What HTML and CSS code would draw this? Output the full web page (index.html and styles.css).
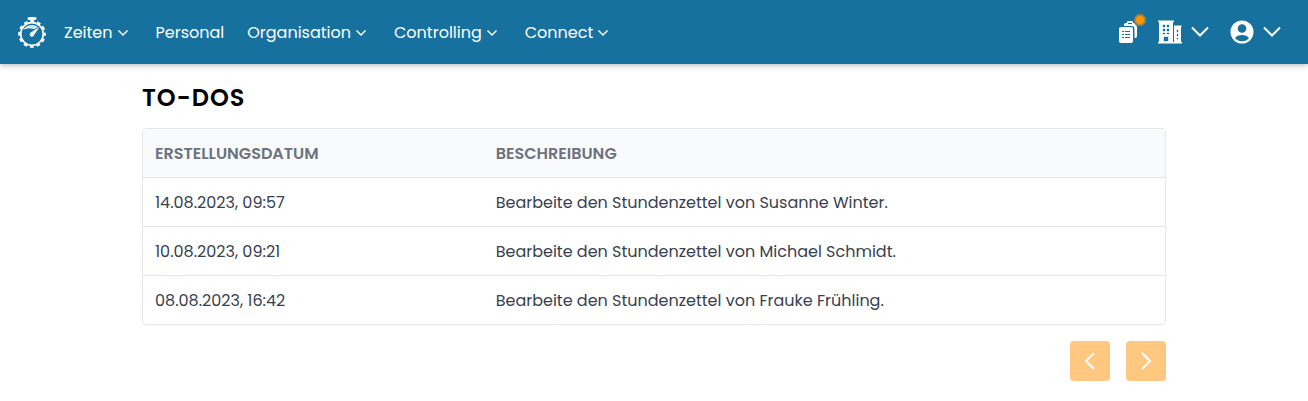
FILE: index.html
```html
<!DOCTYPE html>
<html lang="de">
<head>
<meta charset="utf-8">
<meta name="viewport" content="width=device-width, initial-scale=1">
<title>To-Dos</title>
<link rel="stylesheet" href="styles.css">
</head>
<body>
<header class="topbar">
  <a class="logo" href="#" aria-label="Startseite">
    <svg width="30" height="32" viewBox="0 0 30 32" fill="none" stroke="#fff">
      <path d="M12 2.500h6" stroke-width="3" stroke-linecap="round"/>
      <path d="M15 3v3" stroke-width="3"/>
      <circle cx="15" cy="18" r="11.300" stroke-width="1.700"/>
      <circle cx="15" cy="18" r="12.400" stroke-width="2.800" stroke-dasharray="3.600 2.893" stroke-dashoffset="1.800"/>
      <path d="M6 14c2-3.500 5.500-5 9-5 2.500 0 4.500.8 6 2l-3.500 2.200c-3.500-1-7.500-1-11.500.8z" fill="#fff" stroke="none" opacity=".8"/>
      <path d="M22.500 11l-5.300 7.800a2.300 2.300 0 1 1-3-2.600z" fill="#fff" stroke="none"/>
    </svg>
  </a>
  <nav class="menu">
    <button class="menu-item" type="button">Zeiten<svg class="caret" viewBox="0 0 12 8"><path d="M1.500 1.500 6 6l4.500-4.500"/></svg></button>
    <a class="menu-item" href="#">Personal</a>
    <button class="menu-item" type="button">Organisation<svg class="caret" viewBox="0 0 12 8"><path d="M1.500 1.500 6 6l4.500-4.500"/></svg></button>
    <button class="menu-item" type="button">Controlling<svg class="caret" viewBox="0 0 12 8"><path d="M1.500 1.500 6 6l4.500-4.500"/></svg></button>
    <button class="menu-item" type="button">Connect<svg class="caret" viewBox="0 0 12 8"><path d="M1.500 1.500 6 6l4.500-4.500"/></svg></button>
  </nav>
  <div class="tools">
    <button class="tool" type="button" aria-label="Aufgaben">
      <svg width="18" height="22" viewBox="0 0 18 22">
        <path d="M5 4.500V3.500Q5 2 6.500 2H8a3 3 0 0 1 6 0h1l3 3.500V15a2 2 0 0 1-2 2H15.500V8a3 3 0 0 0-3-3H5z" fill="#fff"/>
        <path d="M9 2.500h4" stroke="#17719f" stroke-width="1.200"/>
        <rect x="0" y="6" width="14" height="16" rx="2" fill="#fff"/>
        <path d="M3 10.500h2M6 10.500h5M3 13.500h2M6 13.500h5M3 16.500h2M6 16.500h5" stroke="#17719f" stroke-width="1.200"/>
      </svg>
      <span class="badge"></span>
    </button>
    <button class="tool" type="button" aria-label="Unternehmen">
      <svg width="24" height="24" viewBox="0 0 24 24">
        <path d="M0 .5h16v1.500h-1v20h1V5.500h7.500V7H23v15h1v1.500H0V22h1V2H0z" fill="#fff"/>
        <path d="M15.500 5v17" stroke="#17719f"/>
        <path d="M5 5h2v2H5zM9 5h2v2H9zM5 9h2v2H5zM9 9h2v2H9zM5 13h2v1H5zM9 13h2v1H9zM6 17h4v4H6zM19 10h1v2h-1zM19 14h1v2h-1zM19 18h1v1h-1z" fill="#17719f" stroke="#17719f" stroke-width=".4"/>
      </svg>
      <svg class="arrow" viewBox="0 0 18 12"><path d="m1 1.500 8 8 8-8"/></svg>
    </button>
    <button class="tool" type="button" aria-label="Benutzerkonto">
      <svg width="24" height="24" viewBox="0 0 24 24">
        <circle cx="12" cy="12" r="11.500" fill="#fff"/>
        <circle cx="12" cy="8.500" r="4.300" fill="#17719f"/>
        <path d="M5 18.200c1.500-2.300 4-3.200 7-3.200s5.500.9 7 3.200c-1.700 2-4.200 3-7 3s-5.300-1-7-3z" fill="#17719f"/>
      </svg>
      <svg class="arrow" viewBox="0 0 18 12"><path d="m1 1.500 8 8 8-8"/></svg>
    </button>
  </div>
</header>
<main class="content">
  <h1 class="title">TO-DOS</h1>
  <div class="panel">
    <table class="todos">
      <thead>
        <tr><th class="date-column" scope="col">ERSTELLUNGSDATUM</th><th scope="col">BESCHREIBUNG</th></tr>
      </thead>
      <tbody>
        <tr><td>14.08.2023, 09:57</td><td>Bearbeite den Stundenzettel von Susanne Winter.</td></tr>
        <tr><td>10.08.2023, 09:21</td><td>Bearbeite den Stundenzettel von Michael Schmidt.</td></tr>
        <tr><td>08.08.2023, 16:42</td><td>Bearbeite den Stundenzettel von Frauke Frühling.</td></tr>
      </tbody>
    </table>
  </div>
  <div class="pager">
    <button class="page-button" type="button" aria-label="Zurück"><svg width="12" height="20" viewBox="0 0 12 20"><path d="m10 2-8 8 8 8"/></svg></button>
    <button class="page-button" type="button" aria-label="Weiter"><svg width="12" height="20" viewBox="0 0 12 20"><path d="m2 2 8 8-8 8"/></svg></button>
  </div>
</main>
</body>
</html>
```
FILE: styles.css
```css
* { box-sizing: border-box; }
body {
  margin: 0;
  background: #fff;
  color: #374151;
  font: 16px/24px Poppins, Inter, sans-serif;
}
button {
  border: 0;
  padding: 0;
  background: none;
  color: inherit;
  font: inherit;
  cursor: pointer;
}
svg { display: block; flex: none; }

.topbar {
  display: flex;
  align-items: center;
  height: 64px;
  padding: 0 27px 0 17px;
  background: #17719f;
  color: #fff;
  box-shadow: 0 1px 6px rgba(0, 0, 0, .3);
}
.logo { margin-right: 17px; }
.menu { display: flex; gap: 23px; }
.menu-item {
  display: flex;
  align-items: center;
  gap: 4px;
  padding-top: 1px;
  color: #fff;
  text-decoration: none;
}
.caret {
  width: 12px;
  height: 8px;
  margin-right: 4px;
  fill: none;
  stroke: #fff;
  stroke-width: 1.5;
}
.tools {
  display: flex;
  align-items: center;
  gap: 21px;
  margin-left: auto;
}
.tool {
  position: relative;
  display: flex;
  align-items: center;
  gap: 9px;
}
.arrow {
  width: 18px;
  height: 12px;
  fill: none;
  stroke: #fff;
  stroke-width: 2;
}
.badge {
  position: absolute;
  top: -7px;
  right: -9px;
  width: 12px;
  height: 12px;
  border: 2px solid #a9823d;
  border-radius: 50%;
  background: #ff9500;
}

.content {
  max-width: 1024px;
  margin: 0 auto;
  padding: 18px 0;
}
.title {
  margin: 0 0 14px;
  color: #000;
  font-size: 24px;
  font-weight: 600;
  line-height: 32px;
  letter-spacing: 1px;
}
.panel {
  overflow: hidden;
  border: 1px solid #e5e7eb;
  border-radius: 4px;
}
.todos {
  width: 100%;
  border-collapse: collapse;
  text-align: left;
}
.todos th, .todos td { padding: 13px 12px 11px; }
.todos th {
  background: #f9fafb;
  color: #6b7280;
  font-weight: 600;
}
.todos tbody tr { border-top: 1px solid #e5e7eb; }
.date-column { width: 33.333%; }
.pager {
  display: flex;
  justify-content: flex-end;
  gap: 16px;
  margin-top: 16px;
}
.page-button {
  display: grid;
  place-items: center;
  width: 40px;
  height: 40px;
  border-radius: 4px;
  background: #ffc780;
}
.page-button path {
  fill: none;
  stroke: #fff;
  stroke-width: 2;
}
```
